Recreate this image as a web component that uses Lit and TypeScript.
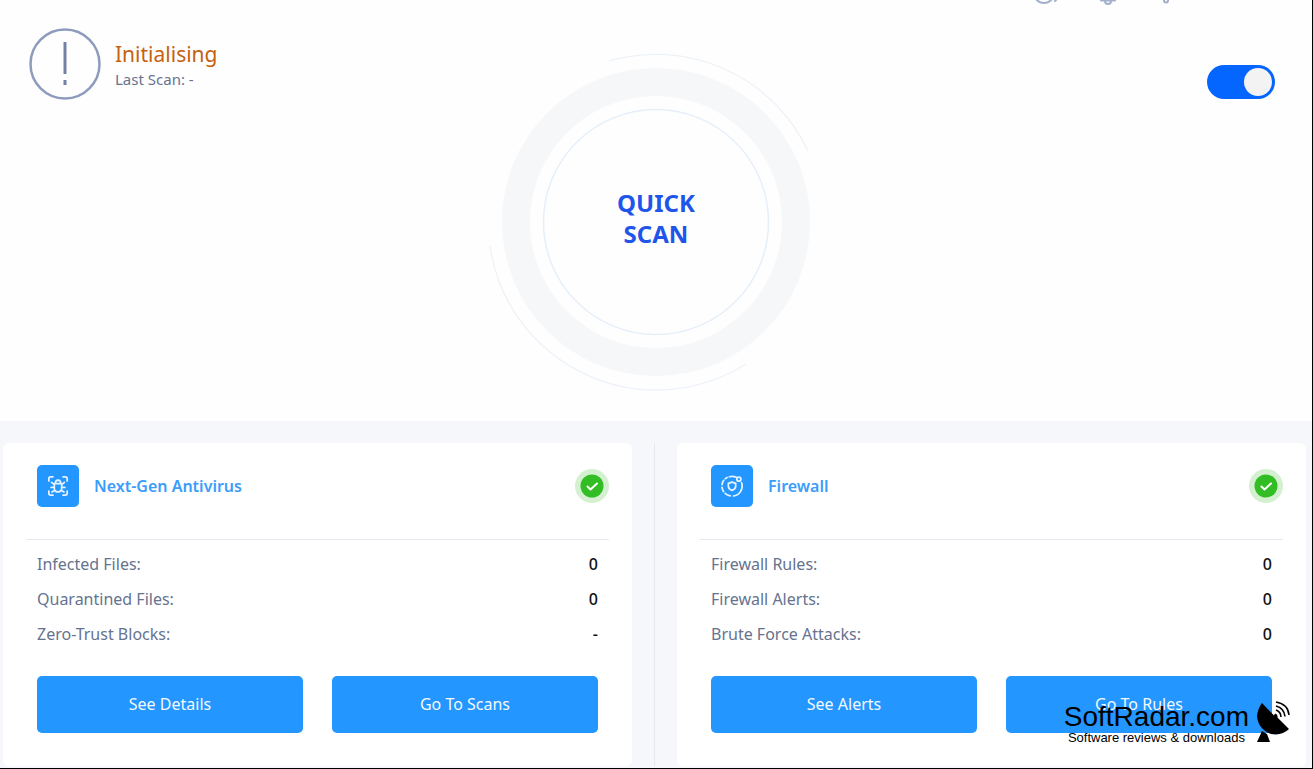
import { LitElement, html, css, svg, TemplateResult } from "lit";
import { customElement, property, state } from "lit/decorators.js";

interface Row {
  label: string;
  value: string;
}

const bugIcon = svg`
  <path d="M2 6.500V4Q2 2 4 2H6.500M17.500 2H20Q22 2 22 4V6.500M22 17.500V20Q22 22 20 22H17.500M6.500 22H4Q2 22 2 20V17.500"/>
  <path d="M8 9.500H16V14.500Q16 18.500 12 18.500Q8 18.500 8 14.500ZM9 9.500Q9 5.500 12 5.500Q15 5.500 15 9.500M8 10.500L5 8M16 10.500L19 8M8 13.500H4.500M16 13.500H19.500M8.500 16.500L5.500 18.500M15.500 16.500L18.500 18.500"/>`;

const firewallIcon = svg`
  <path d="M12 7.800L16 9.200V12.200Q16 15.200 12 16.800Q8 15.200 8 12.200V9.200Z"/>
  <path d="M9 1.900Q13 0.900 16.600 2.500M22.500 8.500A11 11 0 0 1 13.500 22.900M10 22.800A11 11 0 0 1 4.500 20M2.800 18A11 11 0 0 1 1.100 13.500M1.100 10.500A11 11 0 0 1 3 5.800M4.800 4L6.600 2.700"/>
  <circle cx="19.500" cy="4.500" r="2.200"/>`;

@customElement("status-card")
export class StatusCard extends LitElement {
  @property() heading = "";
  @property({ attribute: false }) icon: TemplateResult | unknown = null;
  @property({ attribute: false }) rows: Row[] = [];
  @property({ attribute: false }) actions: string[] = [];

  static styles = css`
    :host {
      display: block;
      background: #fff;
      border-radius: 6px;
      padding: 22px 23px 32px;
    }
    .head {
      display: flex;
      align-items: center;
      padding: 0 0 32px 11px;
      border-bottom: 1px solid #e4e9ef;
    }
    .tile {
      width: 42px;
      height: 42px;
      border-radius: 5px;
      background: #2396ff;
      display: grid;
      place-items: center;
      margin-right: 15px;
    }
    .tile svg {
      width: 22px;
      height: 22px;
      fill: none;
      stroke: #e6f3ff;
      stroke-width: 1.9;
      stroke-linecap: round;
      stroke-linejoin: round;
    }
    h2 {
      flex: 1;
      margin: 0;
      font-size: 16px;
      line-height: 24px;
      font-weight: 600;
      color: #3b9dfa;
    }
    .ok {
      width: 34px;
      height: 34px;
      margin: 4px 0;
      display: block;
    }
    dl {
      margin: 0;
      padding: 7px 11px 0;
    }
    .row {
      display: flex;
      justify-content: space-between;
      font-size: 16px;
      line-height: 35px;
    }
    dt {
      color: #66738f;
    }
    dd {
      margin: 0;
      color: #111;
      font-weight: 500;
    }
    .actions {
      display: grid;
      grid-template-columns: 1fr 1fr;
      gap: 29px;
      padding: 24px 11px 0;
    }
    button {
      height: 57px;
      padding: 0 0 2px;
      border: 0;
      border-radius: 5px;
      background: #2396ff;
      color: #f2f9ff;
      font: inherit;
      font-size: 16px;
      cursor: pointer;
    }
  `;

  render() {
    return html`
      <div class="head">
        <span class="tile"><svg viewBox="0 0 24 24" aria-hidden="true">${this.icon}</svg></span>
        <h2>${this.heading}</h2>
        <svg class="ok" viewBox="0 0 34 34" role="img" aria-label="Active">
          <circle cx="17" cy="17" r="17" fill="#d5f0d0" />
          <circle cx="17" cy="17" r="11.500" fill="#33bd24" />
          <path d="M12.500 17.500L15.500 20.500L22 14.500" fill="none" stroke="#fff" stroke-width="2" stroke-linecap="round" stroke-linejoin="round" />
        </svg>
      </div>
      <dl>
        ${this.rows.map(
          (r) => html`<div class="row"><dt>${r.label}</dt><dd>${r.value}</dd></div>`
        )}
      </dl>
      <div class="actions">
        ${this.actions.map((a) => html`<button type="button">${a}</button>`)}
      </div>
    `;
  }
}

@customElement("app-root")
export class AppRoot extends LitElement {
  @state() private enabled = true;

  static styles = css`
    :host {
      display: flex;
      flex-direction: column;
      position: relative;
      box-sizing: border-box;
      min-height: 100vh;
      background: #f5f7fb;
      border-right: 1px solid #000;
      border-bottom: 1px solid #000;
      font-family: "Noto Sans", "Open Sans", sans-serif;
    }
    .hero {
      background: #fefefe;
      padding-bottom: 30px;
    }
    .tools {
      height: 5px;
      overflow: hidden;
      display: flex;
      justify-content: flex-end;
      align-items: flex-end;
      gap: 36px;
      padding-right: 131px;
    }
    .tools button {
      flex: none;
      padding: 0;
      border: 0;
      background: none;
      width: 26px;
      height: 26px;
    }
    .tools svg {
      display: block;
      width: 26px;
      height: 26px;
      fill: none;
      stroke: #a3b0ca;
      stroke-width: 2;
      stroke-linecap: round;
    }
    .main {
      display: grid;
      grid-template-columns: 1fr auto 1fr;
      align-items: start;
      padding: 0 29px;
    }
    .status {
      display: flex;
      align-items: center;
      gap: 14px;
      padding-top: 23px;
    }
    .alert {
      width: 72px;
      height: 72px;
    }
    h1 {
      margin: 0;
      padding-top: 2px;
      font-size: 21px;
      line-height: 28px;
      font-weight: 400;
      color: #c6610e;
    }
    .last {
      margin: 0;
      font-size: 15px;
      line-height: 22px;
      color: #66738f;
    }
    .scan {
      display: grid;
      place-items: center;
      margin-top: 44px;
      padding: 0;
      border: 0;
      background: none;
      font: inherit;
      cursor: pointer;
    }
    .scan > * {
      grid-area: 1 / 1;
    }
    .scan svg {
      width: 342px;
      height: 342px;
      fill: none;
    }
    .scan span {
      width: min-content;
      margin-bottom: 4px;
      font-size: 24px;
      line-height: 31px;
      font-weight: 700;
      color: #1f55ea;
    }
    .toggle {
      justify-self: end;
      margin: 60px 8px 0 0;
      height: 34px;
    }
    .toggle input {
      appearance: none;
      box-sizing: border-box;
      display: flex;
      width: 68px;
      height: 34px;
      margin: 0;
      padding: 3px;
      border-radius: 17px;
      background: #b7c2d8;
      cursor: pointer;
    }
    .toggle input:checked {
      background: #0566ff;
      justify-content: flex-end;
    }
    .toggle input::before {
      content: "";
      width: 28px;
      height: 28px;
      border-radius: 50%;
      background: #f3f3f4;
    }
    .cards {
      flex: 1;
      display: grid;
      grid-template-columns: 1fr 1px 1fr;
      column-gap: 22px;
      padding: 22px 6px 2px 3px;
    }
    .rule {
      background: #e3e9ef;
    }
    .mark {
      position: absolute;
      right: 22px;
      bottom: 23px;
      display: flex;
      align-items: flex-end;
      gap: 7px;
      font-family: "Liberation Sans", Arial, sans-serif;
      color: #000;
      text-align: center;
      pointer-events: none;
    }
    .name {
      font-size: 28px;
      line-height: 26px;
    }
    .tag {
      font-size: 13px;
      line-height: 15px;
    }
    .mark svg {
      width: 34px;
      height: 42px;
      margin-bottom: 2px;
    }
  `;

  render() {
    return html`
      <section class="hero">
        <div class="tools">
          <button type="button" aria-label="Support">
            <svg viewBox="0 0 26 26"><circle cx="13" cy="14" r="10" /><path d="M24 22L25 21" /></svg>
          </button>
          <button type="button" aria-label="Notifications">
            <svg viewBox="0 0 26 26"><path d="M8 21.500H22M9 20V11A6 6 0 0 1 21 11V20M12 22A3 3 0 0 0 18 22" /></svg>
          </button>
          <button type="button" aria-label="Information">
            <svg viewBox="0 0 26 26"><circle cx="11" cy="21.500" r="2" /><path d="M11 4V12" /></svg>
          </button>
        </div>
        <div class="main">
          <div class="status">
            <svg class="alert" viewBox="0 0 72 72" fill="none" aria-hidden="true">
              <circle cx="36" cy="36" r="34.500" stroke="#8d9cbd" stroke-width="2.500" />
              <path d="M36 14V46M36 52V57" stroke="#7382a4" stroke-width="3" />
            </svg>
            <div>
              <h1>Initialising</h1>
              <p class="last">Last Scan: -</p>
            </div>
          </div>
          <button class="scan" type="button">
            <svg viewBox="0 0 342 342" aria-hidden="true">
              <circle cx="171" cy="173" r="140" stroke="#f6f7f9" stroke-width="28" />
              <circle cx="171" cy="173" r="112.500" stroke="#e6eff9" stroke-width="1.500" />
              <path d="M124 12A168 168 0 0 1 323 102M5 197A168 168 0 0 0 261 315" stroke="#edf2f8" stroke-width="1.300" />
            </svg>
            <span>QUICK SCAN</span>
          </button>
          <label class="toggle">
            <input
              type="checkbox"
              role="switch"
              aria-label="Protection"
              .checked=${this.enabled}
              @change=${(e: Event) => (this.enabled = (e.target as HTMLInputElement).checked)}
            />
          </label>
        </div>
      </section>
      <section class="cards">
        <status-card
          heading="Next-Gen Antivirus"
          .icon=${bugIcon}
          .rows=${[
            { label: "Infected Files:", value: "0" },
            { label: "Quarantined Files:", value: "0" },
            { label: "Zero-Trust Blocks:", value: "-" },
          ]}
          .actions=${["See Details", "Go To Scans"]}
        ></status-card>
        <div class="rule"></div>
        <status-card
          heading="Firewall"
          .icon=${firewallIcon}
          .rows=${[
            { label: "Firewall Rules:", value: "0" },
            { label: "Firewall Alerts:", value: "0" },
            { label: "Brute Force Attacks:", value: "0" },
          ]}
          .actions=${["See Alerts", "Go To Rules"]}
        ></status-card>
      </section>
      <div class="mark">
        <div>
          <div class="name">SoftRadar.com</div>
          <div class="tag">Software reviews &amp; downloads</div>
        </div>
        <svg viewBox="0 0 34 42" aria-hidden="true">
          <path d="M6 2L18 14.500L19 12.500Q22 13 21.500 16.500L33 28Q26 35 15 33Q2 28 1 15Q2 7 6 2Z" />
          <path d="M6 30L11 33L14 41H1Z" />
          <path d="M20 9Q25 11 25 16M20 5Q28 7 29 15.500M20 1Q32 3 33 14" fill="none" stroke="#000" stroke-width="1.600" />
        </svg>
      </div>
    `;
  }
}
